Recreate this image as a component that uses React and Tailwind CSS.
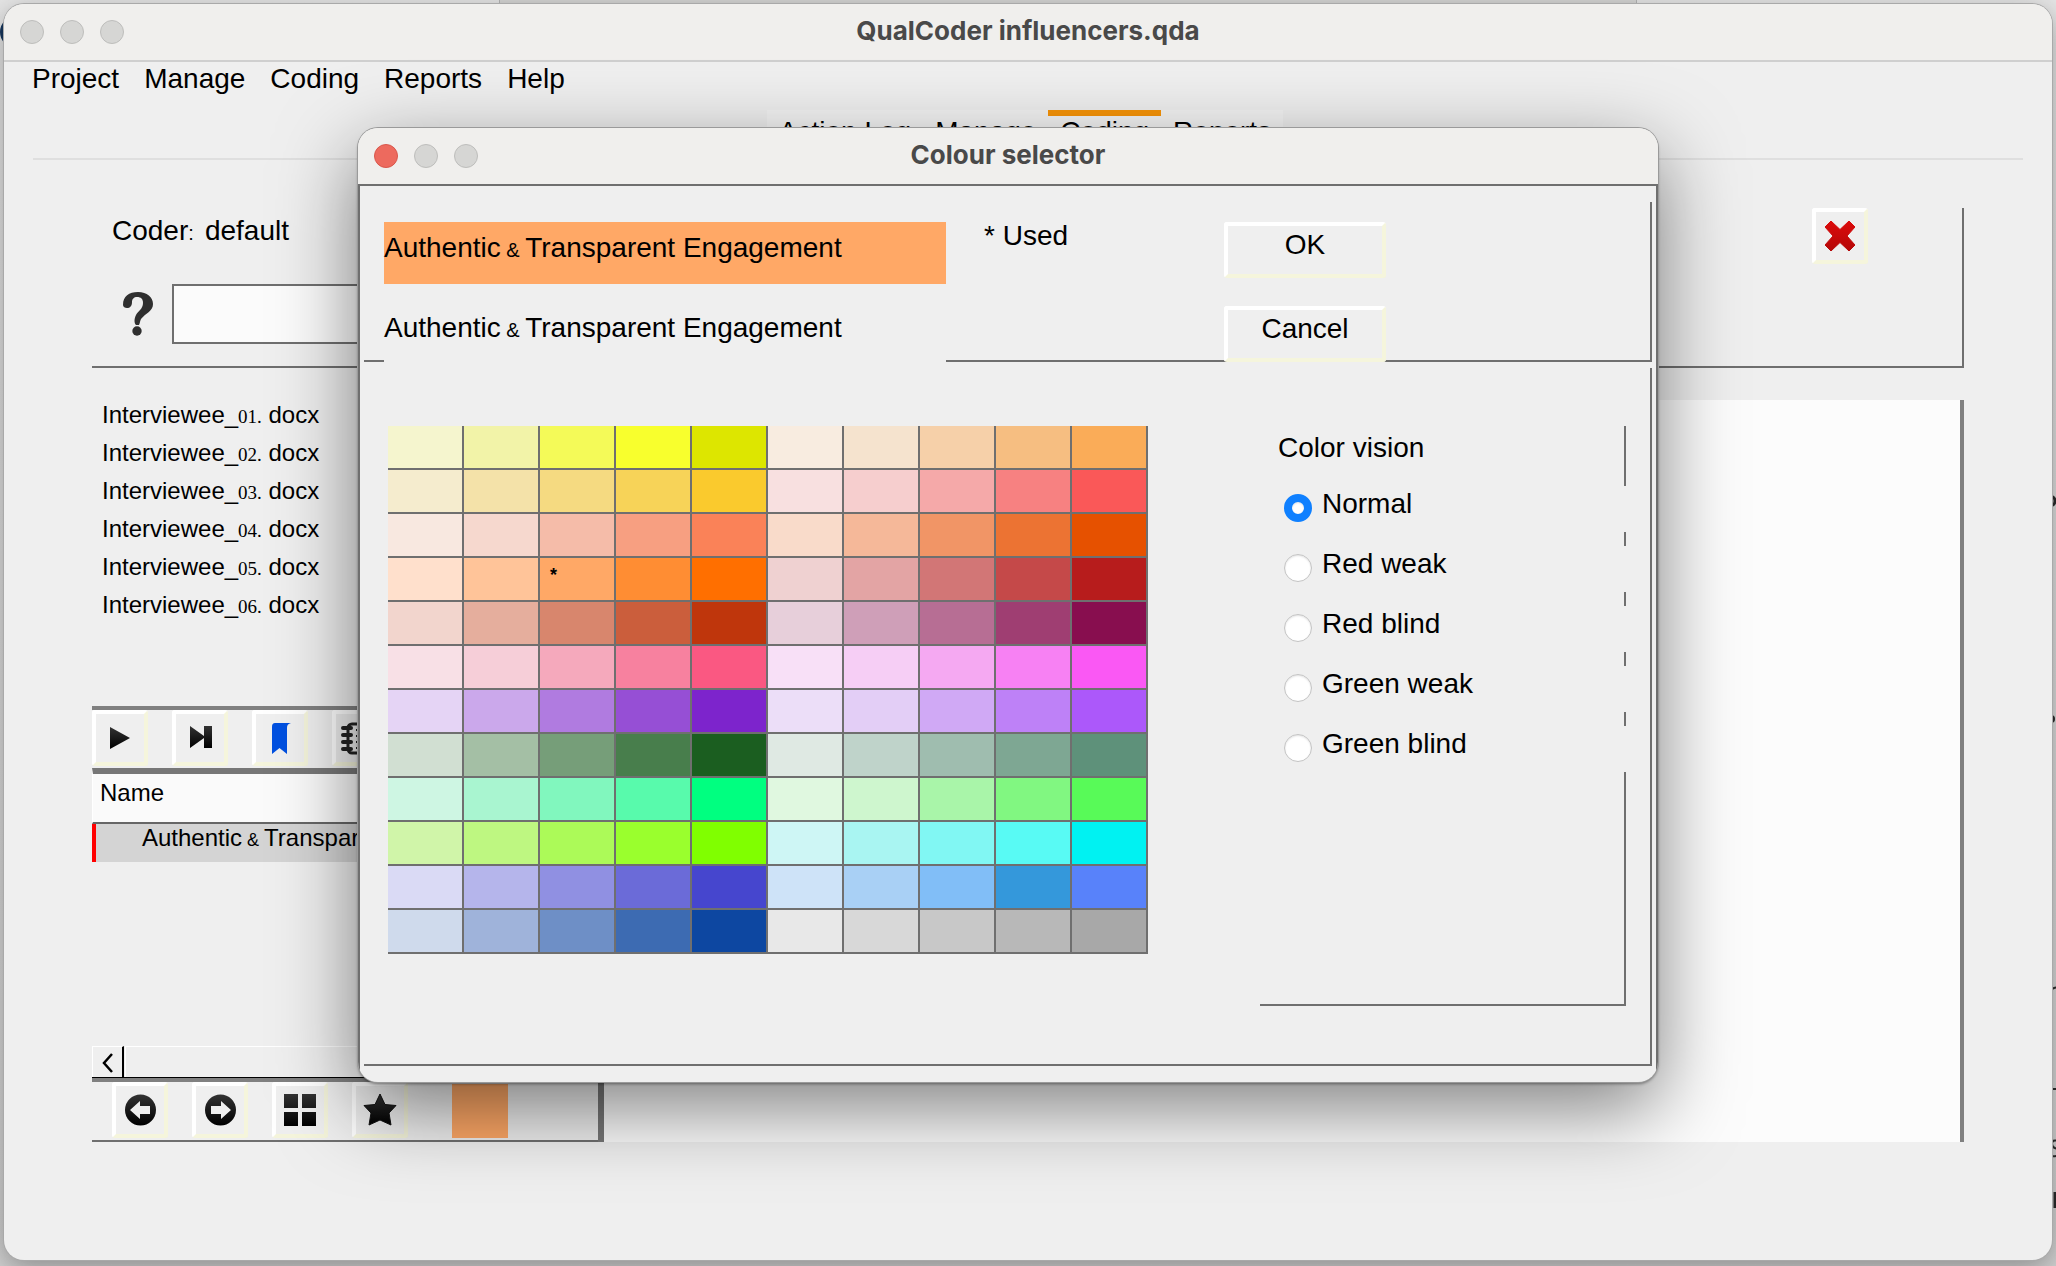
import React, { useState } from "react";

const PALETTE = [
  ["#f5f5ce", "#f2f3a8", "#f4fa58", "#f8ff2d", "#dde600", "#f8ece0", "#f5e3ce", "#f6d0a9", "#f6be81", "#faac58"],
  ["#f5ecce", "#f4e2a9", "#f5da81", "#f7d358", "#faca2d", "#f8e0e0", "#f6cece", "#f5a9a9", "#f78181", "#fa5858"],
  ["#f8e8e0", "#f6d8ce", "#f5bca9", "#f79f81", "#fa8258", "#f9dbca", "#f5b899", "#f19566", "#ec7333", "#e65100"],
  ["#ffe0cc", "#ffc499", "#ffa866", "#ff8d33", "#ff6f00", "#efd1d1", "#e3a4a4", "#d27676", "#c54949", "#b71c1c"],
  ["#f2d5cd", "#e5ae9d", "#d8866d", "#cb5e3c", "#bf360c", "#e7cfda", "#cf9fb8", "#b76e94", "#9f3e72", "#880e4f"],
  ["#f8e0e6", "#f6ced8", "#f5a9bc", "#f7819f", "#fa5882", "#f8e0f7", "#f6cef5", "#f5a9f2", "#f781f3", "#fa58f4"],
  ["#e5d4f5", "#cba8eb", "#b07be0", "#964fd5", "#7d24cc", "#ecdef8", "#e3cef6", "#d0a9f5", "#be81f7", "#ac58fa"],
  ["#d1dfd2", "#a4bfa5", "#769e79", "#487e4c", "#1b5e20", "#dfe9e3", "#bfd3ca", "#9fbdaf", "#7ea793", "#5e917a"],
  ["#cef6e3", "#a9f5d0", "#81f7be", "#58faac", "#00ff80", "#e0f8e0", "#cef6ce", "#a9f5a9", "#81f781", "#58fa58"],
  ["#d0f5a9", "#bef781", "#acfa58", "#9aff2d", "#80ff00", "#cef6f5", "#a9f5f2", "#81f7f3", "#58faf4", "#00f2f2"],
  ["#dadaf5", "#b5b5eb", "#9090e2", "#6b6bd8", "#4646ce", "#cee3f8", "#a9d0f5", "#81bef7", "#3498db", "#5882fa"],
  ["#cfdaec", "#9fb3da", "#6e8fc6", "#3d6bb2", "#0d47a1", "#e8e8e8", "#d8d8d8", "#c8c8c8", "#b8b8b8", "#a8a8a8"],
];

const VISIONS = ["Normal", "Red weak", "Red blind", "Green weak", "Green blind"];
const FILES = ["01", "02", "03", "04", "05", "06"];

const BEVEL =
  "flex items-center justify-center rounded-[3px] border-4 border-t-white border-l-white border-r-[#f5f5dc] border-b-[#f5f5dc] bg-[#efefef]";

function CodeName() {
  return (
    <>
      Authentic<span className="text-[20px] leading-none"> &amp; </span>Transparent Engagement
    </>
  );
}

function TitleBar({ title, active }) {
  return (
    <header className="relative flex h-[56px] shrink-0 items-center justify-center bg-[#f0efed]">
      <div className="absolute left-4 flex gap-4">
        <button
          aria-label="Close"
          className={
            active
              ? "size-6 rounded-full border border-[#d8574c] bg-[#ed6a5e]"
              : "size-6 rounded-full border border-[#bdbdbb] bg-[#d6d6d4]"
          }
        />
        <button aria-label="Minimise" className="size-6 rounded-full border border-[#bdbdbb] bg-[#d6d6d4]" />
        <button aria-label="Zoom" className="size-6 rounded-full border border-[#bdbdbb] bg-[#d6d6d4]" />
      </div>
      <h1 className="pb-0.5 font-['Inter',sans-serif] text-[26px] leading-8 font-bold text-[#494949]">{title}</h1>
    </header>
  );
}

function ToolButton({ label, children }) {
  return (
    <button aria-label={label} className={`${BEVEL} size-14 shrink-0`}>
      <svg viewBox="0 0 48 48" className="size-12 shrink-0" aria-hidden="true">
        <defs>
          <linearGradient id="ink" x1="0" y1="0" x2="0" y2="1">
            <stop offset="0" stopColor="#333" />
            <stop offset="1" stopColor="#000" />
          </linearGradient>
        </defs>
        {children}
      </svg>
    </button>
  );
}

function MainWindow() {
  return (
    <div className="relative flex min-h-[1256px] flex-col overflow-hidden rounded-[20px] bg-[#efefef] shadow-[0_0_0_1px_#a9a9a9,0_8px_30px_rgba(0,0,0,0.35)]">
      <TitleBar title="QualCoder influencers.qda" />
      <nav className="flex gap-[25px] border-t-2 border-[#cfcfcf] px-7 pt-px text-[28px] leading-8">
        {["Project", "Manage", "Coding", "Reports", "Help"].map((m) => (
          <button key={m}>{m}</button>
        ))}
      </nav>

      <div className="mt-[15px] flex h-12 justify-center pr-[6px] text-[28px] leading-8">
        {["Action Log", "Manage", "Coding", "Reports"].map((t) => (
          <button
            key={t}
            className={
              t === "Coding"
                ? "border-t-[6px] border-[#f89407] bg-[#f4f4f4] px-3 pb-4"
                : "border-t-[6px] border-[#f4f4f4] bg-[#f4f4f4] px-3 pb-4"
            }
          >
            {t}
          </button>
        ))}
      </div>
      <hr className="mx-[29px] border-t-2 border-[#dfdfdf]" />

      <div className="mt-12 mr-[88px] mb-[118px] ml-[88px] flex flex-col">
        <section className="flex h-[160px] justify-between border-r-2 border-b-2 border-[#6f6f6f]">
          <div className="flex flex-col pl-5">
            <p className="h-[76px] pt-[7px] text-[28px] leading-8">
              Coder<span className="text-[20px] leading-none">:&nbsp; </span>default
            </p>
            <div className="flex items-center gap-2">
              <button aria-label="Help" className="flex h-[60px] w-[52px] items-center justify-center">
                <svg viewBox="0 0 32 46" className="h-[46px] w-8" fill="#2f2f2f" aria-hidden="true">
                  <path d="M1 14C1 5 7 1 16 1C25 1 31 6 31 13C31 20 24 22 19 28C18 30 18 32 17 34H14C12 32 12 28 14 24C16 20 21 18 21 12C21 8 19 6 15 6C12 6 10 8 10 11C10 15 8 17 5 17C3 17 1 16 1 14Z" />
                  <circle cx="15" cy="40" r="4.700" />
                </svg>
              </button>
              <input
                aria-label="Search codes"
                className="h-[60px] w-[400px] border-2 border-[#6f6f6f] bg-[#fbfbfb] px-2 text-[28px]"
              />
            </div>
          </div>
          <button aria-label="Close tab" className={`${BEVEL} mr-[94px] size-14`}>
            <svg viewBox="0 0 30 30" className="size-[30px]" aria-hidden="true">
              <defs>
                <linearGradient id="red" x1="0" y1="0" x2="0" y2="1">
                  <stop offset="0" stopColor="#dc0b0b" />
                  <stop offset="1" stopColor="#b40808" />
                </linearGradient>
              </defs>
              <path
                d="M6 0L15 8.500L24 0L30 6L22 15L30 24L24 30L15 21.500L6 30L0 24L8 15L0 6Z"
                fill="url(#red)"
                stroke="url(#red)"
                strokeLinejoin="round"
              />
            </svg>
          </button>
        </section>

        <div className="mt-8 flex">
          <section className="flex w-[512px] shrink-0 flex-col border-r-[6px] border-[#777777]">
            <ul className="flex h-[306px] flex-col pl-[10px] text-[24px] leading-[38px]">
              {FILES.map((n) => (
                <li key={n} className="-mt-1 mb-1 h-[38px]">
                  Interviewee_
                  <span className="font-['Liberation_Serif',serif] text-[19px] leading-none">{n}.</span> docx
                </li>
              ))}
            </ul>
            <div className="flex h-[62px] gap-6 border-t-4 border-[#808080]">
              <ToolButton label="Play">
                <path d="M14 13L34 24L14 35Z" fill="url(#ink)" />
              </ToolButton>
              <ToolButton label="Next">
                <path d="M14 12L28 22V12H36V34H28V24L14 34Z" fill="url(#ink)" />
              </ToolButton>
              <ToolButton label="Bookmark">
                <path d="M19 9H35C32 10 31 11 31 14V40L23.500 34L16 40V13C16 10 17 9 19 9Z" fill="#0150e0" />
              </ToolButton>
              <ToolButton label="Notes">
                <rect x="12" y="10" width="28" height="29" rx="4" fill="#efefef" stroke="#222" strokeWidth="3" />
                <path
                  d="M7 14H15M7 21H15M7 28H15M7 35H15"
                  stroke="#222"
                  strokeWidth="4"
                  strokeLinecap="round"
                />
                <path d="M20 16H34M20 22H34M20 28H34M20 34H34" stroke="#222" strokeWidth="2" />
              </ToolButton>
            </div>
            <table className="w-full border-separate border-spacing-0 text-left text-[24px] leading-[30px]">
              <thead>
                <tr>
                  <th className="h-[56px] border-t-[6px] border-b-2 border-l border-t-[#777777] border-b-[#666666] border-l-white bg-[#fafafa] p-0 pb-[10px] pl-[7px] font-normal">
                    Name
                  </th>
                </tr>
              </thead>
              <tbody>
                <tr>
                  <td className="h-[38px] border-l-4 border-[#ff0000] bg-[#d4d4d4] p-0 pb-2 pl-[46px]">
                    <div className="h-[30px] whitespace-nowrap leading-7">
                      Authentic<span className="text-[18px] leading-none"> &amp; </span>Transparent Engagement
                    </div>
                  </td>
                </tr>
              </tbody>
            </table>
            <div className="mt-[184px] flex h-8 border-b border-black">
              <button
                aria-label="Scroll left"
                className="flex w-8 items-center justify-center border-t border-r-2 border-l border-t-white border-r-black border-l-white pt-0.5"
              >
                <svg viewBox="0 0 12 20" className="h-5 w-3" fill="none" aria-hidden="true">
                  <path d="M10 1L2 10L10 19" stroke="#000" strokeWidth="2.500" />
                </svg>
              </button>
              <div className="ml-px grow border-t border-l border-white" />
            </div>
            <div className="flex h-[64px] gap-6 border-t-4 border-b-2 border-t-[#808080] border-b-[#6f6f6f] pl-5">
              <ToolButton label="Back">
                <circle cx="24.500" cy="24" r="15.500" fill="url(#ink)" />
                <path d="M14 24L24 15V20H34V28H24V33Z" fill="#efefef" />
              </ToolButton>
              <ToolButton label="Forward">
                <circle cx="24.500" cy="24" r="15.500" fill="url(#ink)" />
                <path d="M35 24L25 15V20H15V28H25V33Z" fill="#efefef" />
              </ToolButton>
              <ToolButton label="Grid">
                <path d="M8 8H22V22H8ZM26 8H40V22H26ZM8 26H22V40H8ZM26 26H40V40H26Z" fill="url(#ink)" />
              </ToolButton>
              <ToolButton label="Star">
                <path
                  d="M24 8L29 18.500L40 19.500L33 27L35 39L24 34L13 39L15 27L8 19.500L19 18.500Z"
                  fill="url(#ink)"
                  stroke="#111"
                  strokeLinejoin="round"
                />
              </ToolButton>
              <button aria-label="Code colour" className="mt-0.5 ml-5 h-[54px] w-14 bg-[#ffa866]" />
            </div>
          </section>
          <section aria-label="Document" className="grow border-r-4 border-[#808080] bg-[#fcfcfc]" />
        </div>
      </div>
    </div>
  );
}

function ColourDialog() {
  const [vision, setVision] = useState("Normal");
  return (
    <div
      role="dialog"
      aria-label="Colour selector"
      className="flex w-[1300px] flex-col overflow-hidden rounded-[20px] bg-[#efefef] shadow-[0_0_0_1px_#9a9a9a,0_2px_3px_rgba(0,0,0,0.4),0_26px_80px_rgba(0,0,0,0.5)]"
    >
      <TitleBar title="Colour selector" active />
      <div className="flex flex-col border-x-2 border-t-2 border-[#6f6f6f] px-1 pt-4 pb-4 text-[28px] leading-8">
        <div className="flex h-[160px] items-start border-r-2 border-b-2 border-[#6f6f6f] pt-5 pl-5">
          <div className="flex w-[562px] flex-col gap-[18px]">
            <p className="h-[62px] bg-[#ffa866] pt-[10px]">
              <CodeName />
            </p>
            <p className="h-[62px] bg-[#efefef] pt-[10px]">
              <CodeName />
            </p>
          </div>
          <p className="-mt-0.5 w-[278px] pl-[38px]">* Used</p>
          <div className="flex flex-col gap-7">
            <button className={`${BEVEL} h-14 w-[162px] pb-[10px]`}>OK</button>
            <button className={`${BEVEL} h-14 w-[162px] pb-[10px]`}>Cancel</button>
          </div>
        </div>

        <div className="mt-[6px] flex h-[698px] items-start justify-between border-r-2 border-b-2 border-[#6f6f6f] px-6 pt-[58px]">
          <table className="table-fixed border-separate border-spacing-0">
            <tbody>
              {PALETTE.map((row, r) => (
                <tr key={r}>
                  {row.map((c, i) => (
                    <td
                      key={c}
                      className="h-[44px] w-[76px] border-r-2 border-b-2 border-[#6f6f6f] p-0 pb-2 pl-[10px] text-[18px] leading-5 font-bold"
                      style={{ backgroundColor: c }}
                    >
                      {r === 3 && i === 2 ? "*" : ""}
                    </td>
                  ))}
                </tr>
              ))}
            </tbody>
          </table>

          <fieldset className="flex h-[580px] w-[366px] flex-col gap-[14px] border-r-2 border-b-2 border-[#6f6f6f] pl-[18px]">
            <legend className="sr-only">Colour vision</legend>
            <p className="h-[46px] pt-[6px]">Color vision</p>
            {VISIONS.map((v) => (
              <label key={v} className="-mr-0.5 flex h-[46px] bg-[#efefef] pl-[6px]">
                <input
                  type="radio"
                  name="vision"
                  checked={vision === v}
                  onChange={() => setVision(v)}
                  className="mt-2 size-7 appearance-none rounded-full border border-[#c4c4c4] bg-white shadow-[inset_0_1px_2px_rgba(0,0,0,0.12)] checked:border-[8px] checked:border-[#0f80ff]"
                />
                <span className="pt-0.5 pl-[10px]">{v}</span>
              </label>
            ))}
          </fieldset>
        </div>
      </div>
    </div>
  );
}

/* Slivers of the window that lies behind the main one. */
function Backdrop() {
  return (
    <div aria-hidden="true" className="absolute inset-0 overflow-hidden">
      <div className="absolute inset-x-0 top-0 mr-[419px] ml-[499px] h-3 border-x border-[#b5b5b5] bg-[#d6d6d5]" />
      <svg viewBox="0 0 32 32" className="absolute top-4 left-0 size-8" fill="none">
        <circle cx="16" cy="16" r="14.500" stroke="#17375e" strokeWidth="3" />
      </svg>
      <svg viewBox="0 0 12 760" className="absolute top-[480px] right-0 h-[760px] w-3" fill="none" stroke="#2b2b2b">
        <circle cx="6" cy="21" r="5" strokeWidth="3" />
        <circle cx="7" cy="239" r="4" fill="#2b2b2b" stroke="none" />
        <path d="M4 514Q9 506 14 508M6 609H12" strokeWidth="2" />
        <path d="M14 661Q8 659 8 664Q8 668 14 669M8 676Q11 677 14 675" strokeWidth="2" />
        <path d="M11 712V728" strokeWidth="3" />
      </svg>
    </div>
  );
}

export default function App() {
  return (
    <div className="relative min-h-[1266px] overflow-hidden bg-linear-to-b from-[#e6e6e6] to-[#d2d2d2] px-1 pt-1 pb-[6px] font-['Liberation_Sans',Arial,sans-serif] text-black">
      <Backdrop />
      <MainWindow />
      <div className="absolute inset-x-0 top-[128px] flex justify-center pr-[40px]">
        <ColourDialog />
      </div>
    </div>
  );
}
